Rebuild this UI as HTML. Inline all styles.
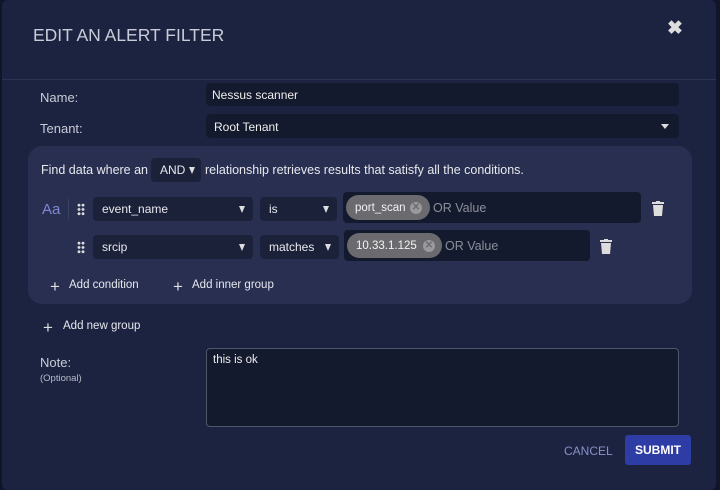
<!DOCTYPE html><html><head><style>
*{box-sizing:border-box;margin:0;padding:0}
body{width:720px;height:490px;background:#10152a;font-family:"Liberation Sans",sans-serif;position:relative;overflow:hidden;color:#e6e8ee}
.m{position:absolute;left:2px;top:0;width:714px;height:490px;background:#1c2341;border-radius:6px}
.a{position:absolute}
.in{position:absolute;background:#141a2d;border-radius:4px;font-size:12px;color:#eee}
.lbl{position:absolute;font-size:13px;color:#c9ccd6}
.sel{position:absolute;background:#1b2139;border-radius:4px;font-size:12px;color:#e8e8ee;padding-left:9px;line-height:24px}
.tri{position:absolute;right:8px;top:9px;width:0;height:0;border-left:3.5px solid transparent;border-right:3.5px solid transparent;border-top:7px solid #ddd}
.chip{position:absolute;background:#6b6b6f;border-radius:13px;font-size:11.5px;color:#f2f2f2;height:25px;display:flex;align-items:center;padding-left:9px}
.x{position:absolute;width:12px;height:12px;border-radius:6px;background:#9a9a9e;color:#6b6b6f;font-size:10px;line-height:12px;text-align:center;font-weight:bold}
.dots{position:absolute;width:8px;height:13px;background:radial-gradient(circle,#ddd 1.3px,transparent 1.6px) 0 0/4px 4.3px}
.plus{position:absolute;font-size:17px;color:#ddd;line-height:14px}
.t{position:absolute;font-size:11.5px;color:#e6e8ee}
</style></head><body>
<div class="m">
<div class="a" style="left:31px;top:25px;font-size:17.5px;color:#c8ccd8">EDIT AN ALERT FILTER</div>
<div class="a" style="left:665px;top:17px;font-size:19px;color:#ddd;font-weight:bold">✖</div>
<div class="a" style="left:0;top:79px;width:714px;height:1px;background:#2c3456"></div>
<div class="lbl" style="left:38px;top:90px">Name:</div>
<div class="in" style="left:204px;top:83px;width:473px;height:23px;padding:5px 6px">Nessus scanner</div>
<div class="lbl" style="left:38px;top:121px">Tenant:</div>
<div class="in" style="left:204px;top:114px;width:473px;height:24px;padding:6px 8px">Root Tenant<div class="tri" style="right:10px;top:10px;border-width:5px 4px 0;border-top:5px solid #ddd"></div></div>
<div class="a" style="left:26px;top:146px;width:664px;height:158px;background:#282f50;border-radius:14px"></div>
<div class="a" style="left:39px;top:163px;font-size:12.5px;color:#e8e8ee">Find data where an</div>
<div class="sel" style="left:149px;top:158px;width:50px;height:24px;background:#1b2139">AND<div class="tri" style="right:6px"></div></div>
<div class="a" style="left:203px;top:163px;font-size:12.5px;color:#e8e8ee">relationship retrieves results that satisfy all the conditions.</div>
<div class="a" style="left:40px;top:201px;font-size:15px;color:#7f88d4">Aa</div>
<div class="a" style="left:66px;top:199px;width:1px;height:20px;background:#3a4262"></div>
<div class="dots" style="left:75px;top:203px"></div>
<div class="sel" style="left:91px;top:197px;width:160px;height:24px">event_name<div class="tri"></div></div>
<div class="sel" style="left:258px;top:197px;width:77px;height:24px">is<div class="tri"></div></div>
<div class="in" style="left:341px;top:192px;width:298px;height:31px"></div>
<div class="chip" style="left:344px;top:195px;width:84px">port_scan</div>
<div class="x" style="left:408px;top:202px">✕</div>
<div class="a" style="left:431px;top:201px;font-size:12.5px;color:#8c8f9a">OR Value</div>
<svg class="a" style="left:650px;top:201px" width="12" height="16" viewBox="0 0 12 16"><rect x="0" y="1" width="12" height="2" fill="#ddd"/><rect x="4" y="0" width="4" height="2" fill="#ddd"/><path d="M1 4h10l-1 11H2z" fill="#ddd"/></svg>
<div class="dots" style="left:75px;top:241px"></div>
<div class="sel" style="left:91px;top:235px;width:160px;height:24px">srcip<div class="tri"></div></div>
<div class="sel" style="left:258px;top:235px;width:79px;height:24px">matches<div class="tri"></div></div>
<div class="in" style="left:342px;top:230px;width:246px;height:31px"></div>
<div class="chip" style="left:345px;top:233px;width:95px">10.33.1.125</div>
<div class="x" style="left:421px;top:240px">✕</div>
<div class="a" style="left:443px;top:239px;font-size:12.5px;color:#8c8f9a">OR Value</div>
<svg class="a" style="left:598px;top:239px" width="12" height="16" viewBox="0 0 12 16"><rect x="0" y="1" width="12" height="2" fill="#ddd"/><rect x="4" y="0" width="4" height="2" fill="#ddd"/><path d="M1 4h10l-1 11H2z" fill="#ddd"/></svg>
<div class="plus" style="left:48px;top:280px">+</div><div class="t" style="left:67px;top:279px">Add condition</div>
<div class="plus" style="left:171px;top:280px">+</div><div class="t" style="left:190px;top:279px">Add inner group</div>
<div class="plus" style="left:41px;top:321px">+</div><div class="t" style="left:61px;top:320px">Add new group</div>
<div class="lbl" style="left:38px;top:355px">Note:</div>
<div class="a" style="left:38px;top:373px;font-size:9.5px;color:#b8bcc8">(Optional)</div>
<div class="in" style="left:204px;top:348px;width:473px;height:79px;border:1px solid #50566a;padding:5px 6px;font-size:11.5px">this is ok</div>
<div class="a" style="left:562px;top:444px;font-size:12px;color:#8890c8">CANCEL</div>
<div class="a" style="left:623px;top:435px;width:66px;height:30px;background:#2e3ca6;border-radius:3px;font-size:12px;font-weight:bold;color:#fff;text-align:center;line-height:30px">SUBMIT</div>
</div>
</body></html>
